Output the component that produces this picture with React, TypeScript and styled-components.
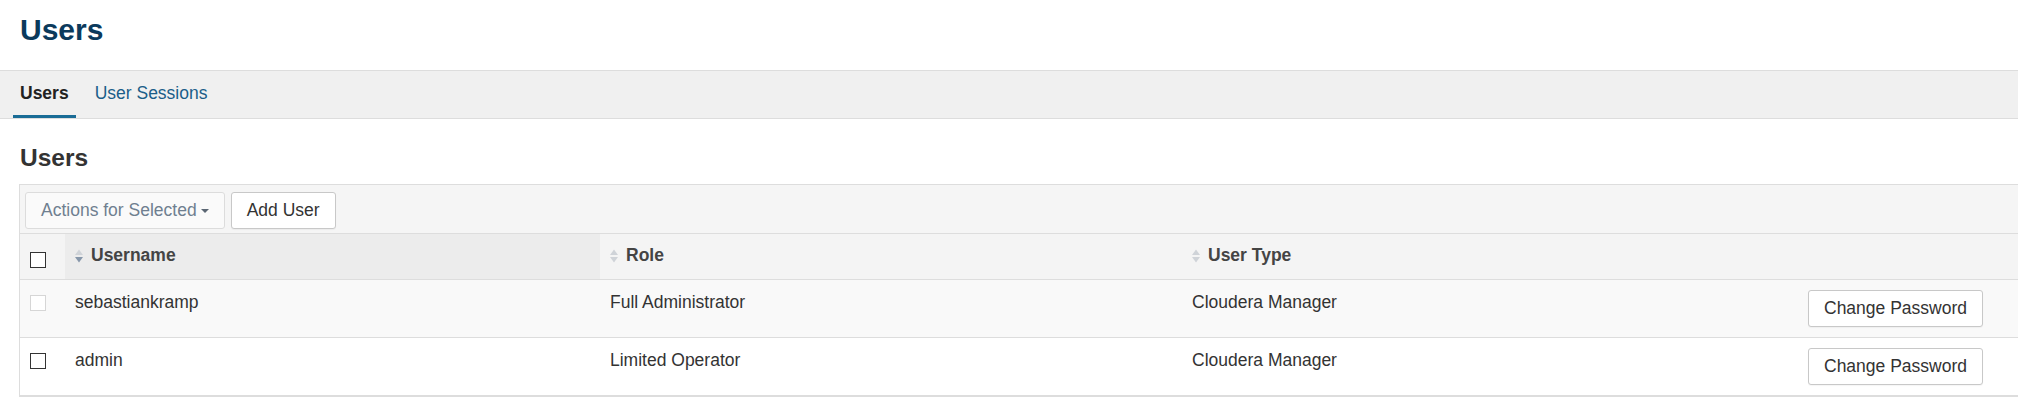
import React from 'react';
import styled, { createGlobalStyle } from 'styled-components';

const GlobalStyle = createGlobalStyle`
  html, body {
    margin: 0;
    padding: 0;
    background: #ffffff;
    overflow: hidden;
  }
  body {
    font-family: "Liberation Sans", Arial, sans-serif;
    font-size: 17.5px;
    line-height: 25px;
    color: #333333;
  }
  * {
    box-sizing: border-box;
  }
`;

type User = {
  name: string;
  role: string;
  type: string;
  disabled?: boolean;
};

const users: User[] = [
  { name: 'sebastiankramp', role: 'Full Administrator', type: 'Cloudera Manager', disabled: true },
  { name: 'admin', role: 'Limited Operator', type: 'Cloudera Manager' },
];

const SortIcon = ({ active }: { active?: boolean }) => (
  <SortSvg width="8" height="14" viewBox="0 0 8 14">
    <path d="M0 6 L4 0.5 L8 6 Z" fill="#cfd3d8" />
    <path d="M0 8 L8 8 L4 13.5 Z" fill={active ? '#8797aa' : '#cfd3d8'} />
  </SortSvg>
);

const App = () => {
  return (
    <Page>
      <GlobalStyle />
      <PageHeader>
        <Title>Users</Title>
      </PageHeader>
      <TabBar>
        <Tab active>Users</Tab>
        <Tab>User Sessions</Tab>
      </TabBar>
      <SectionTitle>Users</SectionTitle>
      <Panel>
        <Toolbar>
          <Button disabled>
            Actions for Selected
            <Caret />
          </Button>
          <Button>Add User</Button>
        </Toolbar>
        <Table>
          <colgroup>
            <col style={{ width: 45 }} />
            <col style={{ width: 535 }} />
            <col style={{ width: 582 }} />
            <col style={{ width: 420 }} />
            <col />
          </colgroup>
          <thead>
            <tr>
              <Th>
                <Checkbox offset={9} />
              </Th>
              <Th sorted>
                <HeadLabel>
                  <SortIcon active />
                  Username
                </HeadLabel>
              </Th>
              <Th>
                <HeadLabel>
                  <SortIcon />
                  Role
                </HeadLabel>
              </Th>
              <Th>
                <HeadLabel>
                  <SortIcon />
                  User Type
                </HeadLabel>
              </Th>
              <Th />
            </tr>
          </thead>
          <tbody>
            {users.map((u, i) => (
              <Row key={u.name} striped={i % 2 === 0}>
                <Td>
                  <Checkbox offset={5} disabled={u.disabled} />
                </Td>
                <Td>{u.name}</Td>
                <Td>{u.role}</Td>
                <Td>{u.type}</Td>
                <ActionTd>
                  <Button>Change Password</Button>
                </ActionTd>
              </Row>
            ))}
          </tbody>
        </Table>
      </Panel>
    </Page>
  );
};

const Page = styled.div`
  width: 100%;
`;

const PageHeader = styled.div`
  height: 70px;
  padding: 12px 20px 0;
`;

const Title = styled.h1`
  margin: 0;
  font-size: 30px;
  line-height: 36px;
  font-weight: 700;
  color: #0b3a5c;
`;

const TabBar = styled.div`
  display: flex;
  gap: 12px;
  height: 49px;
  padding: 0 13px;
  background: #f0f0f0;
  border-top: 1px solid #dddddd;
  border-bottom: 1px solid #dddddd;
`;

const Tab = styled.div<{ active?: boolean }>`
  height: 47px;
  padding: 10px 7px 0;
  font-size: 17.5px;
  line-height: 25px;
  font-weight: ${p => (p.active ? 700 : 400)};
  color: ${p => (p.active ? '#222222' : '#1b5e89')};
  border-bottom: 3px solid ${p => (p.active ? '#1a6c96' : 'transparent')};
`;

const SectionTitle = styled.h2`
  margin: 24px 0 11px;
  padding: 0 20px;
  font-size: 24.5px;
  line-height: 30px;
  font-weight: 700;
  color: #333333;
`;

const Panel = styled.div`
  margin: 0 -2px 0 19px;
  border: 1px solid #dddddd;
`;

const Toolbar = styled.div`
  display: flex;
  gap: 6px;
  padding: 7px 5px 4px;
  background: #f5f5f5;
  border-bottom: 1px solid #dddddd;
`;

const Button = styled.button`
  display: inline-flex;
  align-items: center;
  height: 37px;
  padding: 6px 15px;
  font-family: "Liberation Sans", Arial, sans-serif;
  font-size: 17.5px;
  line-height: 25px;
  color: #333333;
  background: #ffffff;
  border: 1px solid #c8c8c8;
  border-radius: 3px;
  box-shadow: 0 1px 1px rgba(0, 0, 0, 0.04);
  cursor: pointer;

  &:disabled {
    color: #6f7f90;
    background: #fafafa;
    border-color: #dcdcdc;
    box-shadow: none;
    cursor: default;
  }
`;

const Caret = styled.span`
  display: inline-block;
  margin-left: 4px;
  width: 0;
  height: 0;
  border-left: 4px solid transparent;
  border-right: 4px solid transparent;
  border-top: 4px solid #5a6673;
`;

const Table = styled.table`
  width: 100%;
  table-layout: fixed;
  border-collapse: collapse;
`;

const Th = styled.th<{ sorted?: boolean }>`
  height: 45px;
  padding: 9px 10px 0;
  text-align: left;
  vertical-align: top;
  font-size: 17.5px;
  line-height: 25px;
  font-weight: 700;
  color: #444444;
  background: ${p => (p.sorted ? '#ececec' : '#f4f4f4')};
  border-bottom: 1px solid #dddddd;
`;

const HeadLabel = styled.div`
  display: flex;
  align-items: center;
  gap: 8px;
  height: 25px;
`;

const SortSvg = styled.svg`
  display: block;
  flex: none;
`;

const Row = styled.tr<{ striped?: boolean }>`
  background: ${p => (p.striped ? '#f9f9f9' : '#ffffff')};
  border-bottom: 1px solid #dddddd;
`;

const Td = styled.td`
  height: 57px;
  padding: 10px;
  vertical-align: top;
  white-space: nowrap;
  color: #333333;
`;

const ActionTd = styled(Td)`
  padding-right: 36px;
  text-align: right;
`;

const Checkbox = styled.span<{ offset: number; disabled?: boolean }>`
  display: block;
  width: 16px;
  height: 16px;
  margin-top: ${p => p.offset}px;
  background: #ffffff;
  border: 1px solid ${p => (p.disabled ? '#d6d6d6' : '#333333')};
`;

export default App;
